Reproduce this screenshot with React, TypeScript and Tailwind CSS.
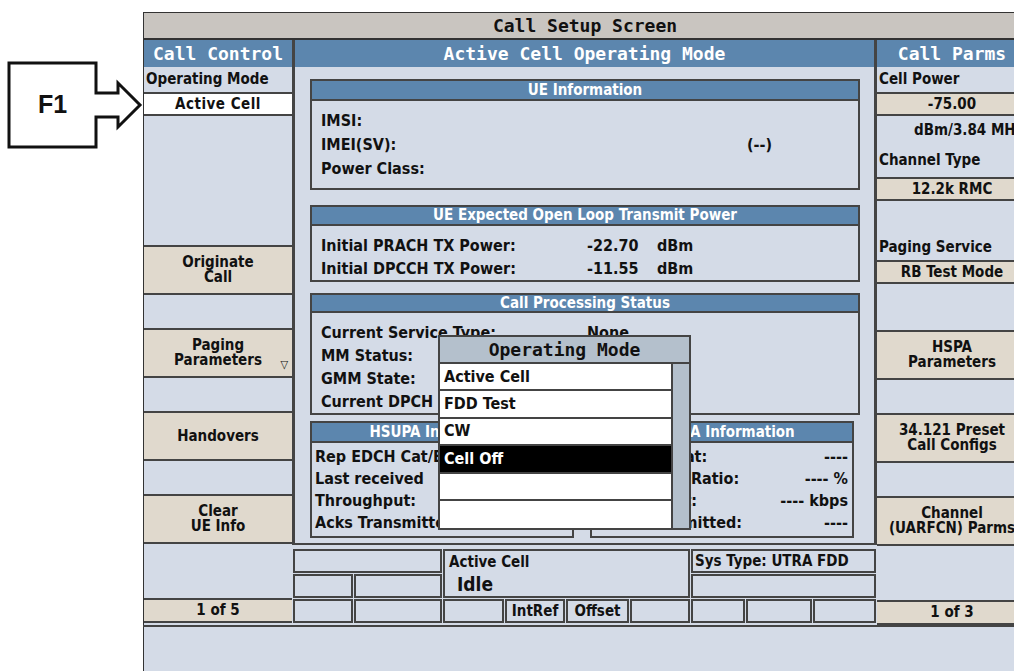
import React from 'react';

// Shared looks for the instrument screen
const MONO = "font-['DejaVu_Sans_Mono',monospace] font-bold text-[18px] leading-none";
const BODY = "font-['DejaVu_Sans_Condensed','DejaVu_Sans',sans-serif] font-bold text-[15px] leading-none text-[#111]";
const TEXT = "font-['DejaVu_Sans_Condensed','DejaVu_Sans',sans-serif] font-bold text-[16px] leading-none text-[#111]";
const PANEL = 'bg-[#d4dbe7]';
const BLUE = 'bg-[#5c86ae]';
const BEIGE = 'bg-[#e0d9cd]';

function SoftKey({ lines, arrow }: { lines: string[]; arrow?: boolean }) {
  return (
    <div className={`relative h-[50px] flex flex-col items-center justify-center border-y-2 border-[#444] ${BEIGE} ${BODY} leading-[15px]`}>
      {lines.map((l) => (
        <span key={l} className="whitespace-nowrap">{l}</span>
      ))}
      {arrow && <span className="absolute right-1 bottom-1.5 text-[11px] leading-none">▽</span>}
    </div>
  );
}

function Gap({ h }: { h: string }) {
  return <div className={h} />;
}

function InfoBox({ title, className, children }: { title: string; className?: string; children: React.ReactNode }) {
  return (
    <div className={`border-2 border-[#444] flex flex-col ${className ?? ''}`}>
      <div className={`h-[20px] ${BLUE} border-b-2 border-[#444] flex items-center justify-center ${BODY} text-white`}>{title}</div>
      {children}
    </div>
  );
}

function Row({ label, value, unit, h = 'h-[23px]' }: { label: string; value?: string; unit?: string; h?: string }) {
  return (
    <div className={`${h} flex items-center ${TEXT}`}>
      <span className="w-[266px] shrink-0 whitespace-nowrap">{label}</span>
      {value && <span className="w-[70px]">{value}</span>}
      {unit && <span>{unit}</span>}
    </div>
  );
}

function SideRow({ label, value }: { label: string; value: string }) {
  return (
    <div className={`h-[22px] flex items-center justify-between whitespace-nowrap ${TEXT}`}>
      <span>{label}</span>
      <span>{value}</span>
    </div>
  );
}

function Cell({ className, children }: { className?: string; children?: React.ReactNode }) {
  return <div className={`border-2 border-[#444] ${className ?? ''}`}>{children}</div>;
}

function CallControl() {
  return (
    <div className={`w-[149px] shrink-0 flex flex-col border-l border-[#333] ${PANEL}`}>
      <div className={`h-[27px] ${BLUE} flex items-center justify-center text-white ${MONO}`}>Call Control</div>
      <div className={`h-[25px] flex items-center px-0.5 ${BODY}`}>Operating Mode</div>
      <div className={`h-[24px] bg-white border-y-2 border-[#444] flex items-center justify-center tracking-[0.5px] ${BODY}`}>Active Cell</div>
      <Gap h="h-[129px]" />
      <SoftKey lines={['Originate', 'Call']} />
      <Gap h="h-[33px]" />
      <SoftKey lines={['Paging', 'Parameters']} arrow />
      <Gap h="h-[33px]" />
      <SoftKey lines={['Handovers']} />
      <Gap h="h-[33px]" />
      <SoftKey lines={['Clear', 'UE Info']} />
      <Gap h="h-[54px]" />
      <div className={`h-[25px] ${BEIGE} border-y-2 border-[#444] flex items-center justify-center ${BODY}`}>1 of 5</div>
    </div>
  );
}

function CallParms() {
  return (
    <div className={`w-[150px] shrink-0 flex flex-col ${PANEL}`}>
      <div className={`h-[27px] ${BLUE} flex items-center justify-center text-white ${MONO}`}>Call Parms</div>
      <div className={`h-[25px] flex items-center px-0.5 ${BODY}`}>Cell Power</div>
      <div className={`h-[24px] ${BEIGE} border-y-2 border-[#444] flex items-center justify-center ${BODY}`}>-75.00</div>
      <div className={`h-[28px] flex items-center pl-[37px] whitespace-nowrap ${BODY}`}>dBm/3.84 MHz</div>
      <div className={`h-[33px] flex items-center px-0.5 ${BODY}`}>Channel Type</div>
      <div className={`h-[24px] ${BEIGE} border-y-2 border-[#444] flex items-center justify-center ${BODY}`}>12.2k RMC</div>
      <Gap h="h-[33px]" />
      <div className={`h-[26px] flex items-center px-0.5 ${BODY}`}>Paging Service</div>
      <div className={`h-[24px] ${BEIGE} border-y-2 border-[#444] flex items-center justify-center ${BODY}`}>RB Test Mode</div>
      <Gap h="h-[46px]" />
      <SoftKey lines={['HSPA', 'Parameters']} />
      <Gap h="h-[33px]" />
      <SoftKey lines={['34.121 Preset', 'Call Configs']} />
      <Gap h="h-[33px]" />
      <SoftKey lines={['Channel', '(UARFCN) Parms']} />
      <Gap h="h-[54px]" />
      <div className={`h-[25px] ${BEIGE} border-y-2 border-[#444] flex items-center justify-center ${BODY}`}>1 of 3</div>
    </div>
  );
}

function OperatingModeMenu() {
  const items = ['Active Cell', 'FDD Test', 'CW', 'Cell Off', '', ''];
  return (
    <div className="absolute left-[438px] top-[335px] w-[253px] border-2 border-[#444] bg-[#b4c0cc] flex flex-col">
      <div className={`h-[27px] flex items-center justify-center border-b-2 border-[#444] text-[#111] ${MONO}`}>Operating Mode</div>
      <div className="flex">
        <div className="w-[231px] flex flex-col">
          {items.map((it, i) => (
            <div
              key={i}
              className={`h-[27.4px] flex items-center px-1 border-b-2 border-[#444] last:border-b-0 ${TEXT} ${it === 'Cell Off' ? 'bg-black text-white' : 'bg-white'}`}
            >
              {it}
            </div>
          ))}
        </div>
        <div className="flex-1 border-l-2 border-[#444] bg-[#b4c0cc]" />
      </div>
    </div>
  );
}

function StatusGrid() {
  return (
    <div className="h-[80px] flex gap-px px-px pt-[4px] pb-[2px]">
      <div className="w-[149px] flex flex-col gap-px">
        <Cell className="h-[24px]" />
        <div className="h-[24px] flex gap-px">
          <Cell className="w-[60px]" />
          <Cell className="flex-1" />
        </div>
        <div className="h-[24px] flex gap-px">
          <Cell className="w-[60px]" />
          <Cell className="flex-1" />
        </div>
      </div>
      <div className="w-[247px] flex flex-col gap-px">
        <Cell className={`h-[49px] flex flex-col px-1 pt-[4px] ${BODY}`}>
          <span>Active Cell</span>
          <span className="pl-2 pt-[5px] text-[19px]">Idle</span>
        </Cell>
        <div className={`h-[24px] flex gap-px ${BODY} text-[14px]`}>
          <Cell className="w-[61px]" />
          <Cell className="w-[60px] flex items-center justify-center">IntRef</Cell>
          <Cell className="w-[63px] flex items-center justify-center">Offset</Cell>
          <Cell className="flex-1" />
        </div>
      </div>
      <div className="flex-1 flex flex-col gap-px">
        <Cell className={`h-[24px] flex items-center px-0.5 ${BODY} text-[14px]`}>Sys Type: UTRA FDD</Cell>
        <Cell className="h-[24px]" />
        <div className="h-[24px] flex gap-px">
          <Cell className="w-[54px]" />
          <Cell className="w-[66px]" />
          <Cell className="flex-1" />
        </div>
      </div>
    </div>
  );
}

function ActiveCellPanel() {
  return (
    <div className={`w-[585px] shrink-0 flex flex-col ${PANEL}`}>
      <div className="h-[505px] flex flex-col border-x-[3px] border-b-2 border-[#444]">
        <div className={`h-[27px] ${BLUE} flex items-center justify-center text-white ${MONO}`}>Active Cell Operating Mode</div>
        <div className="flex-1 flex flex-col pl-[15px] pr-[14px] pt-[12px]">
          <InfoBox title="UE Information" className="h-[111px]">
            <div className="flex flex-col px-[9px] pt-[8px]">
              <Row label="IMSI:" h="h-[24px]" />
              <div className={`h-[24px] flex items-center ${TEXT}`}>
                <span className="w-[426px]">IMEI(SV):</span>
                <span>(--)</span>
              </div>
              <Row label="Power Class:" h="h-[24px]" />
            </div>
          </InfoBox>
          <InfoBox title="UE Expected Open Loop Transmit Power" className="h-[77px] mt-[15px]">
            <div className="flex flex-col px-[9px] pt-[8px]">
              <Row label="Initial PRACH TX Power:" value="-22.70" unit="dBm" />
              <Row label="Initial DPCCH TX Power:" value="-11.55" unit="dBm" />
            </div>
          </InfoBox>
          <InfoBox title="Call Processing Status" className="h-[122px] mt-[11px]">
            <div className="flex flex-col px-[9px] pt-[8px]">
              <Row label="Current Service Type:" value="None" />
              <Row label="MM Status:" />
              <Row label="GMM State:" />
              <Row label="Current DPCH" />
            </div>
          </InfoBox>
          <div className="flex gap-[16px] mt-[6px]">
            <InfoBox title="HSUPA Information" className="w-[264px] h-[117px]">
              <div className="flex flex-col px-[3px] pt-[3px]">
                <SideRow label="Rep EDCH Cat/EDCH Cat:" value="----" />
                <SideRow label="Last received" value="" />
                <SideRow label="Throughput:" value="" />
                <SideRow label="Acks Transmitted:" value="" />
              </div>
            </InfoBox>
            <InfoBox title="HSDPA Information" className="w-[264px] h-[117px]">
              <div className="flex flex-col px-[4px] pt-[3px]">
                <SideRow label="HS-DSCH Cat:" value="----" />
                <SideRow label="Block Error Ratio:" value="---- %" />
                <SideRow label="Throughput:" value="---- kbps" />
                <SideRow label="Acks Transmitted:" value="----" />
              </div>
            </InfoBox>
          </div>
        </div>
      </div>
      <StatusGrid />
    </div>
  );
}

function F1Callout() {
  return (
    <div className="w-[143px] shrink-0 pt-[61px]">
      <div className="relative w-[143px] h-[90px]">
        <svg width="143" height="90" viewBox="0 0 143 90" className="absolute inset-0">
          <path
            d="M9 2 H96 V32 H118 V22 L140 44 L118 66 V56 H96 V86 H9 Z"
            fill="white"
            stroke="#111"
            strokeWidth="3"
            strokeLinejoin="miter"
          />
        </svg>
        <div className="absolute left-[9px] top-[2px] w-[87px] h-[84px] flex items-center justify-center font-['Liberation_Sans',Arial,sans-serif] font-bold text-[25px] text-[#111]">
          F1
        </div>
      </div>
    </div>
  );
}

export default function App() {
  return (
    <div className="w-[1014px] h-[671px] bg-white overflow-hidden flex relative">
      <F1Callout />
      <div className="w-[883px] shrink-0 pt-[12px] flex flex-col">
        <div className={`h-[28px] bg-[#c9c5c0] border-t border-l border-b-2 border-[#333] flex items-center justify-center text-[#111] ${MONO}`}>
          Call Setup Screen
        </div>
        <div className="flex border-b-2 border-[#444]">
          <CallControl />
          <ActiveCellPanel />
          <CallParms />
        </div>
        <div className={`flex-1 ${PANEL} border-l border-[#333]`} />
      </div>
      <OperatingModeMenu />
    </div>
  );
}
